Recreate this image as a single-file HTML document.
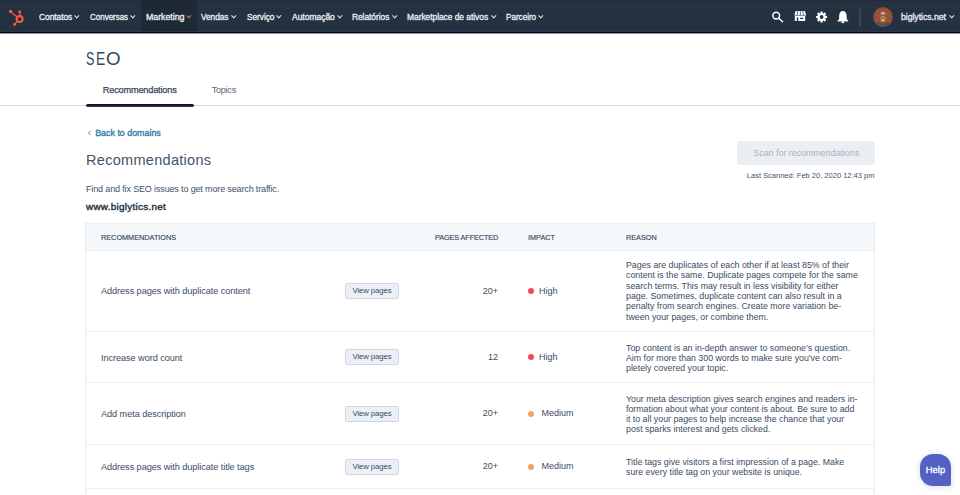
<!DOCTYPE html>
<html><head><meta charset="utf-8">
<style>
*{box-sizing:border-box;margin:0;padding:0}
html,body{width:960px;height:495px;overflow:hidden;background:#fff;font-family:"Liberation Sans",sans-serif;color:#33475b}
.a{position:absolute;white-space:nowrap;line-height:1}
#nav{position:absolute;left:0;top:0;width:960px;height:33px;background:#243141;border-bottom:1px solid #02061e;box-shadow:0 1px 0 rgba(10,14,40,.45),inset 0 -1px 0 #2b3846,inset 0 1px 0 #222a37}
.ni{position:absolute;transform-origin:0 0;top:12.9px;font-size:8.6px;font-weight:400;-webkit-text-stroke:0.3px #eaf0f6;color:#eaf0f6;line-height:1;white-space:nowrap;letter-spacing:-0.05px}
.chev{position:absolute;top:15.4px;width:6px;height:4px}
#mk{position:absolute;left:141px;top:0;width:56px;height:31px;background:#1e2936}
.tab{font-size:9.2px;color:#33475b}
.th{font-size:8.1px;color:#33475b;top:234px;-webkit-text-stroke:0.15px #33475b;transform:scaleX(0.9);transform-origin:0 0}
.row{position:absolute;left:85px;width:790px;border-left:1px solid #e9eef3;border-right:1px solid #e9eef3;border-bottom:1px solid #ebeff4}
.cell{position:absolute;top:0;bottom:0;display:flex;align-items:center;white-space:nowrap}
.rt{left:15px;color:#3a4c5f;font-size:9.2px;line-height:1;letter-spacing:-0.08px;transform:translateY(0.6px)}
.btn{left:259px;}
.btn span{display:block;width:54px;height:16px;background:#eaf0f6;border:1px solid #cfd8e2;border-radius:2px;font-size:7.8px;line-height:14px;text-align:center;color:#3b4d60;letter-spacing:-0.12px}
.pg{right:376px;font-size:9px;line-height:1;text-align:right;color:#3a4c5f}
.imp{left:442px;font-size:9px;line-height:1;color:#3a4c5f}
.dot{display:inline-block;width:6px;height:6px;border-radius:50%;margin-right:5px}
.rs{left:540px;font-size:8.8px;line-height:10.3px;white-space:nowrap;color:#3a4c5f}
.r2 .cell{top:0.8px}.r3 .rs{top:1.2px}.r4 .cell{top:0.4px}.r4 .rs{top:1.8px}.r2 .rs{top:2px}
.seo{top:49.5px;font-size:18px;color:#34485c;transform-origin:0 0}
</style></head><body>
<div id="nav">
  <div id="mk"></div>
  <svg style="position:absolute;left:5px;top:5px" width="24" height="24" viewBox="5 5 24 24">
    <g stroke="#f45a45" stroke-width="1.2" fill="none" stroke-linecap="round">
      <line x1="10.6" y1="11.6" x2="17.4" y2="17.3"/>
      <line x1="19.8" y1="11.8" x2="19.7" y2="16.4"/>
      <line x1="14.7" y1="24.2" x2="17.6" y2="21.2"/>
      <circle cx="19.6" cy="19.1" r="2.95" stroke-width="2.1"/>
    </g>
    <g fill="#f45a45">
      <circle cx="10.6" cy="11.6" r="1.75"/>
      <circle cx="19.8" cy="11.8" r="1.55"/>
      <circle cx="14.7" cy="24.2" r="1.55"/>
    </g>
  </svg>
  <div class="ni" style="left:38.7px;transform:scaleX(0.979)">Contatos</div>
  <div class="ni" style="left:90px;transform:scaleX(0.938)">Conversas</div>
  <div class="ni" style="left:145.7px;transform:scaleX(1.030)">Marketing</div>
  <div class="ni" style="left:201.3px;transform:scaleX(0.968)">Vendas</div>
  <div class="ni" style="left:246.7px;transform:scaleX(0.967)">Serviço</div>
  <div class="ni" style="left:291.7px;transform:scaleX(0.995)">Automação</div>
  <div class="ni" style="left:352.3px;transform:scaleX(0.976)">Relatórios</div>
  <div class="ni" style="left:406.7px;transform:scaleX(0.982)">Marketplace de ativos</div>
  <div class="ni" style="left:506px;transform:scaleX(0.952)">Parceiro</div>
  <svg style="position:absolute;left:0;top:0" width="960" height="32" viewBox="0 0 960 32">
    <g fill="none" stroke="#fff" stroke-width="1.5"><circle cx="776.2" cy="15.6" r="3.4"/><line x1="778.8" y1="18.2" x2="782.6" y2="21.8" stroke-linecap="round"/></g>
    <g fill="#fff">
      <path d="M795.6,11 H805 L806.2,15.4 H794.3 Z"/>
      <g stroke="#253342" stroke-width="0.7"><line x1="797.7" y1="11" x2="797.1" y2="15.4"/><line x1="800.3" y1="11" x2="800.3" y2="15.4"/><line x1="802.9" y1="11" x2="803.5" y2="15.4"/></g>
      <path d="M794.8,16.1 H805.2 V21.1 H794.8 Z M796.8,17.6 V21.1 H798.3 V17.6 Z M800.1,17.8 V19.1 H803.1 V17.8 Z" fill-rule="evenodd"/>
      <path d="M825.43,15.84 L827.09,15.91 L827.09,18.09 L825.43,18.16 L825.13,18.89 L826.26,20.11 L824.71,21.66 L823.49,20.53 L822.76,20.83 L822.69,22.49 L820.51,22.49 L820.44,20.83 L819.71,20.53 L818.49,21.66 L816.94,20.11 L818.07,18.89 L817.77,18.16 L816.11,18.09 L816.11,15.91 L817.77,15.84 L818.07,15.11 L816.94,13.89 L818.49,12.34 L819.71,13.47 L820.44,13.17 L820.51,11.51 L822.69,11.51 L822.76,13.17 L823.49,13.47 L824.71,12.34 L826.26,13.89 L825.13,15.11Z M823.50,17.0 A1.9,1.9 0 1 0 819.70,17.0 A1.9,1.9 0 1 0 823.50,17.0 Z" fill-rule="evenodd"/>
      <path d="M842.8,11 Q846.4,11.2 846.6,15.6 L846.8,19.2 L848.2,20.6 V21.4 H837.6 V20.6 L839,19.2 L839.2,15.6 Q839.4,11.2 842.8,11 Z"/>
      <ellipse cx="842.9" cy="22.2" rx="1.4" ry="1"/>
    </g>
    <rect x="859.6" y="8.6" width="1" height="18" fill="#4f5d6d"/>
    <defs><clipPath id="av"><circle cx="883" cy="17" r="10"/></clipPath></defs>
    <g clip-path="url(#av)">
      <rect x="872" y="6" width="22" height="22" fill="#874a33"/>
      <path d="M875,13 Q878,8.5 883,8.8 Q888.5,8.8 891,13 L891,22 L875,22 Z" fill="#94533a"/>
      <path d="M880.2,12.6 Q883,11 885.8,12.6 L886,20.5 Q883,23.5 880,20.5 Z" fill="#a45f3c"/>
      <path d="M880.8,12.4 Q883,11.4 885.2,12.4 L885,14.2 L881,14.2 Z" fill="#e2ae8c"/>
      <rect x="880.3" y="15" width="5.4" height="1.5" rx="0.6" fill="#58606c"/>
      <circle cx="883" cy="16.4" r="0.9" fill="#a9b6c0"/>
      <path d="M881,19.2 Q883,18.4 885,19.2 L884.7,21.6 Q883,22.4 881.3,21.6 Z" fill="#e0a348"/>
      <path d="M880.3,17 L881.3,17 L881.3,18.8 L880.3,18.8 Z M884.7,17 L885.7,17 L885.7,18.8 L884.7,18.8 Z" fill="#d39448"/>
      <path d="M872,28 Q875,22.5 880,22.5 L883,24.5 L886,22.5 Q891,22.5 894,28 Z" fill="#4a5564"/>
    </g>
  </svg>
  <div class="ni" style="left:901px;transform:scaleX(1.014)">biglytics.net</div>
  <svg class="chev" style="left:74px" width="6" height="4" viewBox="0 0 6 4"><polyline points="0.7,0.7 2.75,2.9 4.8,0.7" fill="none" stroke="#dfe6ee" stroke-width="1.05" stroke-linecap="round" stroke-linejoin="round"/></svg>
  <svg class="chev" style="left:130px" width="6" height="4" viewBox="0 0 6 4"><polyline points="0.7,0.7 2.75,2.9 4.8,0.7" fill="none" stroke="#dfe6ee" stroke-width="1.05" stroke-linecap="round" stroke-linejoin="round"/></svg>
  <svg class="chev" style="left:186px" width="6" height="4" viewBox="0 0 6 4"><polyline points="0.7,0.7 2.75,2.9 4.8,0.7" fill="none" stroke="#e8744f" stroke-width="1.05" stroke-linecap="round" stroke-linejoin="round"/></svg>
  <svg class="chev" style="left:231px" width="6" height="4" viewBox="0 0 6 4"><polyline points="0.7,0.7 2.75,2.9 4.8,0.7" fill="none" stroke="#dfe6ee" stroke-width="1.05" stroke-linecap="round" stroke-linejoin="round"/></svg>
  <svg class="chev" style="left:276px" width="6" height="4" viewBox="0 0 6 4"><polyline points="0.7,0.7 2.75,2.9 4.8,0.7" fill="none" stroke="#dfe6ee" stroke-width="1.05" stroke-linecap="round" stroke-linejoin="round"/></svg>
  <svg class="chev" style="left:336.7px" width="6" height="4" viewBox="0 0 6 4"><polyline points="0.7,0.7 2.75,2.9 4.8,0.7" fill="none" stroke="#dfe6ee" stroke-width="1.05" stroke-linecap="round" stroke-linejoin="round"/></svg>
  <svg class="chev" style="left:391.7px" width="6" height="4" viewBox="0 0 6 4"><polyline points="0.7,0.7 2.75,2.9 4.8,0.7" fill="none" stroke="#dfe6ee" stroke-width="1.05" stroke-linecap="round" stroke-linejoin="round"/></svg>
  <svg class="chev" style="left:490.7px" width="6" height="4" viewBox="0 0 6 4"><polyline points="0.7,0.7 2.75,2.9 4.8,0.7" fill="none" stroke="#dfe6ee" stroke-width="1.05" stroke-linecap="round" stroke-linejoin="round"/></svg>
  <svg class="chev" style="left:538.3px" width="6" height="4" viewBox="0 0 6 4"><polyline points="0.7,0.7 2.75,2.9 4.8,0.7" fill="none" stroke="#dfe6ee" stroke-width="1.05" stroke-linecap="round" stroke-linejoin="round"/></svg>
  <svg class="chev" style="left:948.5px" width="6" height="4" viewBox="0 0 6 4"><polyline points="0.7,0.7 2.75,2.9 4.8,0.7" fill="none" stroke="#dfe6ee" stroke-width="1.05" stroke-linecap="round" stroke-linejoin="round"/></svg>
</div>

<div class="a seo" style="left:86.03px;transform:scaleX(0.70)">S</div><div class="a seo" style="left:95.86px;transform:scaleX(0.77)">E</div><div class="a seo" style="left:105.62px;transform:scaleX(1.04)">O</div>
<div class="a tab" style="left:102.8px;top:86.3px;letter-spacing:-0.19px;-webkit-text-stroke:0.25px #33475b">Recommendations</div>
<div class="a tab" style="left:211.7px;top:86.3px;letter-spacing:-0.3px;color:#5a6d80">Topics</div>
<div style="position:absolute;left:0;top:105px;width:960px;height:1px;background:#d3d9e1"></div>
<div style="position:absolute;left:86px;top:103.5px;width:108px;height:3px;background:linear-gradient(#060a22,#1a2536 60%,#39475a);border-radius:2px"></div>

<svg style="position:absolute;left:86.5px;top:130px" width="4" height="6" viewBox="0 0 4 6"><polyline points="3.2,1.2 1.5,3 3.2,4.8" fill="none" stroke="#2f7fa3" stroke-width="0.9" stroke-linecap="round" stroke-linejoin="round"/></svg>
<div class="a" style="left:95.2px;top:128.9px;font-size:8.9px;font-weight:400;-webkit-text-stroke:0.35px #2f7fa3;color:#2f7fa3;letter-spacing:0px">Back to domains</div>
<div class="a" style="left:86px;top:153.2px;font-size:14.5px;color:#435569;letter-spacing:0.3px">Recommendations</div>
<div class="a" style="left:86px;top:184.6px;font-size:9px;color:#3e5165;letter-spacing:-0.145px">Find and fix SEO issues to get more search traffic.</div>
<div class="a" style="left:86px;top:202.2px;font-size:9.9px;font-weight:400;-webkit-text-stroke:0.4px #213343;color:#213343;letter-spacing:0.28px">www.biglytics.net</div>

<div style="position:absolute;left:737px;top:140.6px;width:138px;height:24.3px;background:#ebeff4;border-radius:3px"></div>
<div class="a" style="left:753.3px;top:149px;font-size:8.9px;color:#a7b2be">Scan for recommendations</div>
<div class="a" style="right:85.6px;top:171.7px;font-size:7.5px;color:#3f5266">Last Scanned: Feb 20, 2020 12:43 pm</div>

<!-- table -->
<div style="position:absolute;left:85px;top:223px;width:790px;height:28px;background:#f5f8fa;border:1px solid #e9eef3;border-bottom:1px solid #ebeff4"></div>
<div class="a th" style="left:100.6px">RECOMMENDATIONS</div>
<div class="a th" style="right:462.3px;letter-spacing:-0.12px;transform-origin:100% 0">PAGES AFFECTED</div>
<div class="a th" style="left:527.5px">IMPACT</div>
<div class="a th" style="left:626px">REASON</div>

<div class="row" style="top:251px;height:81px">
  <div class="cell rt">Address pages with duplicate content</div>
  <div class="cell btn"><span>View pages</span></div>
  <div class="cell pg">20+</div>
  <div class="cell imp"><i class="dot" style="background:#f04a4a"></i>High</div>
  <div class="cell rs">Pages are duplicates of each other if at least 85% of their<br>content is the same. Duplicate pages compete for the same<br>search terms. This may result in less visibility for either<br>page. Sometimes, duplicate content can also result in a<br>penalty from search engines. Create more variation be-<br>tween your pages, or combine them.</div>
</div>
<div class="row r2" style="top:332px;height:51px">
  <div class="cell rt">Increase word count</div>
  <div class="cell btn"><span>View pages</span></div>
  <div class="cell pg">12</div>
  <div class="cell imp"><i class="dot" style="background:#f04a4a"></i>High</div>
  <div class="cell rs">Top content is an in-depth answer to someone's question.<br>Aim for more than 300 words to make sure you've com-<br>pletely covered your topic.</div>
</div>
<div class="row r3" style="top:383px;height:62px">
  <div class="cell rt">Add meta description</div>
  <div class="cell btn"><span>View pages</span></div>
  <div class="cell pg">20+</div>
  <div class="cell imp"><i class="dot" style="background:#eaa65c;margin-right:7.5px"></i>Medium</div>
  <div class="cell rs">Your meta description gives search engines and readers in-<br>formation about what your content is about. Be sure to add<br>it to all your pages to help increase the chance that your<br>post sparks interest and gets clicked.</div>
</div>
<div class="row r4" style="top:445px;height:44px">
  <div class="cell rt">Address pages with duplicate title tags</div>
  <div class="cell btn"><span>View pages</span></div>
  <div class="cell pg">20+</div>
  <div class="cell imp"><i class="dot" style="background:#eaa65c;margin-right:7.5px"></i>Medium</div>
  <div class="cell rs">Title tags give visitors a first impression of a page. Make<br>sure every title tag on your website is unique.</div>
</div>
<div class="row" style="top:489px;height:20px;border-bottom:none"></div>

<div style="position:absolute;left:920px;top:454px;width:31px;height:32px;background:#5361c4;border-radius:13px 13px 2px 13px;box-shadow:0 1px 6px rgba(45,62,80,.18);color:#fff;font-size:9.4px;font-weight:400;-webkit-text-stroke:0.3px #fff;letter-spacing:0.1px;line-height:32px;text-align:center">Help</div>
</body></html>
